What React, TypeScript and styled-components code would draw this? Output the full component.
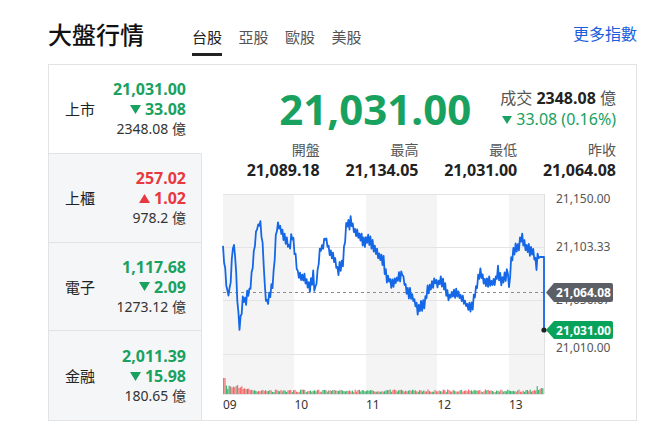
import React from "react";
import styled, { createGlobalStyle } from "styled-components";

const GlobalStyle = createGlobalStyle`
  body {
    margin: 0;
    background: #fff;
    font-family: "Noto Sans", "Noto Sans CJK TC", sans-serif;
    color: #222;
  }
`;

const GREEN = "#19a15f";
const RED = "#e8383f";

const Page = styled.div`
  width: 646px;
  height: 444px;
  box-sizing: border-box;
  padding: 0 9px 0 48px;
`;

const Header = styled.div`
  height: 64px;
  display: flex;
  align-items: flex-end;
  padding-bottom: 8px;
  box-sizing: border-box;
`;

const Title = styled.h1`
  margin: 0 48px 6px 0;
  font-size: 24px;
  font-weight: 500;
  line-height: 30px;
  color: #111;
`;

const Tabs = styled.nav`
  display: flex;
  gap: 16.5px;
  flex: 1;
`;

const Tab = styled.div<{ $active?: boolean }>`
  font-size: 15px;
  line-height: 20px;
  padding-bottom: 6px;
  border-bottom: 3px solid ${(p) => (p.$active ? "#222" : "transparent")};
  color: ${(p) => (p.$active ? "#222" : "#555")};
`;

const MoreLink = styled.a`
  font-size: 16px;
  line-height: 20px;
  margin-bottom: 12px;
  color: #1a5edb;
  text-decoration: none;
`;

const Card = styled.div`
  width: 589px;
  height: 357px;
  box-sizing: border-box;
  border: 1px solid #e3e3e3;
  display: grid;
  grid-template-columns: 153px 1fr;
`;

const MarketList = styled.div`
  display: grid;
  grid-template-rows: repeat(4, 1fr);
`;

const MarketRow = styled.div<{ $active?: boolean }>`
  display: flex;
  align-items: center;
  justify-content: space-between;
  padding: 0 15px 0 16px;
  background: ${(p) => (p.$active ? "#fff" : "#f5f6f8")};
  border-right: 1px solid ${(p) => (p.$active ? "transparent" : "#e3e3e3")};
  border-bottom: 1px solid #e3e3e3;
  &:last-child {
    border-bottom: none;
  }
`;

const MarketName = styled.div`
  font-size: 15px;
  color: #222;
`;

const MarketValues = styled.div`
  display: flex;
  flex-direction: column;
  align-items: flex-end;
`;

const Price = styled.div<{ $up?: boolean }>`
  font-size: 16px;
  font-weight: 700;
  line-height: 20px;
  color: ${(p) => (p.$up ? RED : GREEN)};
  display: flex;
  align-items: center;
`;

const Volume = styled.div`
  font-size: 14px;
  line-height: 19px;
  color: #333;
`;

const Detail = styled.div`
  display: flex;
  flex-direction: column;
`;

const TopRow = styled.div`
  display: flex;
  justify-content: flex-end;
  align-items: center;
  gap: 29px;
  padding: 18px 20px 0 0;
`;

const BigPrice = styled.div`
  font-size: 42px;
  font-weight: 700;
  line-height: 52px;
  color: ${GREEN};
`;

const Summary = styled.div`
  display: flex;
  flex-direction: column;
  align-items: flex-end;
  font-size: 16px;
  line-height: 21px;
`;

const Muted = styled.span`
  color: #555;
`;

const Strong = styled.span`
  font-weight: 700;
  color: #222;
`;

const Change = styled.div`
  color: ${GREEN};
  display: flex;
  align-items: center;
`;

const Stats = styled.div`
  display: grid;
  grid-template-columns: repeat(4, 1fr);
  padding: 5px 20px 0 19px;
`;

const Stat = styled.div`
  display: flex;
  flex-direction: column;
  align-items: flex-end;
`;

const StatLabel = styled.div`
  font-size: 14px;
  line-height: 20px;
  color: #555;
`;

const StatValue = styled.div`
  font-size: 16px;
  font-weight: 700;
  line-height: 20px;
  color: #222;
`;

const ChartBox = styled.div`
  margin: 10px 0 0 20px;
  line-height: 0;
`;

function Tri({ up, size = 11 }: { up?: boolean; size?: number }) {
  const h = Math.round(size * 0.82);
  return (
    <svg width={size} height={h} viewBox="0 0 10 8" style={{ marginRight: 4 }}>
      <path d={up ? "M5 0 L10 8 L0 8 Z" : "M0 0 L10 0 L5 8 Z"} fill="currentColor" />
    </svg>
  );
}

const markets = [
  { name: "上市", price: "21,031.00", change: "33.08", vol: "2348.08", up: false },
  { name: "上櫃", price: "257.02", change: "1.02", vol: "978.2", up: true },
  { name: "電子", price: "1,117.68", change: "2.09", vol: "1273.12", up: false },
  { name: "金融", price: "2,011.39", change: "15.98", vol: "180.65", up: false },
];

const stats = [
  { label: "開盤", value: "21,089.18" },
  { label: "最高", value: "21,134.05" },
  { label: "最低", value: "21,031.00" },
  { label: "昨收", value: "21,064.08" },
];

function seeded(seed: number) {
  let s = seed;
  return () => {
    s = (s * 1664525 + 1013904223) % 4294967296;
    return s / 4294967296;
  };
}

const keys: [number, number][] = [
  [223, 248], [227, 292], [230, 290], [233, 243], [235, 250], [237, 292], [239, 327],
  [241, 320], [243, 295], [245, 300], [248, 293], [250, 292], [254, 250], [257, 228],
  [260, 222], [263, 248], [265, 290], [267, 302], [270, 295], [273, 282], [275, 250],
  [277, 225], [280, 228], [285, 238], [290, 248], [292, 235], [295, 252], [298, 275],
  [305, 278], [310, 288], [313, 273], [315, 292], [320, 252], [325, 238], [330, 252],
  [335, 262], [338, 273], [343, 262], [347, 222], [350, 220], [355, 232], [360, 235],
  [365, 245], [368, 238], [377, 252], [383, 262], [387, 278], [393, 285], [402, 272],
  [407, 292], [413, 298], [417, 308], [423, 305], [427, 292], [435, 282], [438, 285],
  [442, 278], [445, 288], [450, 298], [453, 292], [460, 295], [467, 305], [472, 308],
  [475, 292], [480, 272], [485, 282], [495, 282], [498, 268], [503, 282], [508, 268],
  [509, 292], [511, 262], [513, 252], [518, 245], [522, 238], [527, 248], [532, 252],
  [537, 265], [539, 257], [543, 257],
];

function interp(x: number) {
  for (let i = 0; i < keys.length - 1; i++) {
    const [x0, y0] = keys[i];
    const [x1, y1] = keys[i + 1];
    if (x >= x0 && x <= x1) return y0 + ((y1 - y0) * (x - x0)) / (x1 - x0);
  }
  return keys[keys.length - 1][1];
}

// zigzag noise on top of the key points, so the line looks like tick data
function buildLine() {
  const r = seeded(11);
  const pts: string[] = [];
  let sign = 1;
  for (let x = 223; x <= 543; x += 1.1) {
    sign = -sign;
    let jitter = sign * (1 + r() * 4.5);
    if (r() > 0.88) jitter *= 1.7;
    if (x > 538) jitter = 0;
    pts.push(`${x.toFixed(1)},${(interp(x) + jitter).toFixed(1)}`);
  }
  pts.push("543,257", "544,257", "544,330");
  return "M" + pts.join(" L");
}

function buildBars() {
  const r = seeded(3);
  const bars: { x: number; h: number; c: string }[] = [];
  for (let x = 223; x < 543; x += 1.4) {
    let h = 2 + r() * 2.5;
    if (x < 225) h = 16;
    else if (x < 242) h = 5 + r() * 4;
    else if (x < 255) h = 3 + r() * 3;
    else if (x > 535) h = 3 + r() * 5;
    const k = r();
    const c = x < 225 ? "#f07070" : k < 0.45 ? "#f26a6a" : k < 0.9 ? "#3cb371" : "#a49584";
    bars.push({ x, h, c });
  }
  return bars;
}

const linePath = buildLine();
const bars = buildBars();

function IndexChart() {
  const yLabels = [
    { y: 203, t: "21,150.00" },
    { y: 251, t: "21,103.33" },
    { y: 304, t: "21,056.67" },
    { y: 352, t: "21,010.00" },
  ];
  const hours = ["09", "10", "11", "12", "13"];
  return (
    <svg width={414} height={222} viewBox="222 190 414 222">
      <rect x={223} y={194} width={71} height={200} fill="#f4f4f5" />
      <rect x={366} y={194} width={71} height={200} fill="#f4f4f5" />
      <rect x={509} y={194} width={35} height={200} fill="#f4f4f5" />
      {[194, 247, 300, 354].map((y) => (
        <line key={y} x1={223} x2={544} y1={y + 0.5} y2={y + 0.5} stroke="#e4e4e6" />
      ))}
      <line x1={544.5} x2={544.5} y1={194} y2={394} stroke="#e0e0e0" />
      <line x1={223} x2={544} y1={394.5} y2={394.5} stroke="#e4e4e6" />
      {bars.map((b, i) => (
        <rect key={i} x={b.x} y={394 - b.h} width={1.2} height={b.h} fill={b.c} />
      ))}
      <line x1={223} x2={544} y1={292.5} y2={292.5} stroke="#8c8c8c" strokeDasharray="3 3" />
      <path d={linePath} fill="none" stroke="#1467e6" strokeWidth={1.8} strokeLinejoin="round" />
      <circle cx={544} cy={330} r={2.6} fill="#222" />
      {yLabels.map((l) => (
        <text key={l.t} x={556} y={l.y} fontSize={12} fill="#555" fontFamily="Noto Sans, sans-serif">
          {l.t}
        </text>
      ))}
      {hours.map((h, i) => (
        <text key={h} x={223 + i * 71.5} y={409} fontSize={12} fill="#333" fontFamily="Noto Sans, sans-serif">
          {h}
        </text>
      ))}
      <path d="M546,292.5 L554,283 H611 Q613,283 613,285 V300 Q613,302 611,302 H554 Z" fill="#5c6066" />
      <text x={583.5} y={296.8} fontSize={12} fontWeight={700} fill="#fff" textAnchor="middle" fontFamily="Noto Sans, sans-serif">
        21,064.08
      </text>
      <path d="M546,330 L554,321 H611 Q613,321 613,323 V337 Q613,339 611,339 H554 Z" fill="#07a35a" />
      <text x={583.5} y={334.5} fontSize={12} fontWeight={700} fill="#fff" textAnchor="middle" fontFamily="Noto Sans, sans-serif">
        21,031.00
      </text>
    </svg>
  );
}

export default function App() {
  return (
    <Page>
      <GlobalStyle />
      <Header>
        <Title>大盤行情</Title>
        <Tabs>
          <Tab $active>台股</Tab>
          <Tab>亞股</Tab>
          <Tab>歐股</Tab>
          <Tab>美股</Tab>
        </Tabs>
        <MoreLink href="#">更多指數</MoreLink>
      </Header>
      <Card>
        <MarketList>
          {markets.map((m, i) => (
            <MarketRow key={m.name} $active={i === 0}>
              <MarketName>{m.name}</MarketName>
              <MarketValues>
                <Price $up={m.up}>{m.price}</Price>
                <Price $up={m.up}>
                  <Tri up={m.up} />
                  {m.change}
                </Price>
                <Volume>{m.vol} 億</Volume>
              </MarketValues>
            </MarketRow>
          ))}
        </MarketList>
        <Detail>
          <TopRow>
            <BigPrice>21,031.00</BigPrice>
            <Summary>
              <div>
                <Muted>成交 </Muted>
                <Strong>2348.08</Strong>
                <Muted> 億</Muted>
              </div>
              <Change>
                <Tri size={10} />
                33.08 (0.16%)
              </Change>
            </Summary>
          </TopRow>
          <Stats>
            {stats.map((s) => (
              <Stat key={s.label}>
                <StatLabel>{s.label}</StatLabel>
                <StatValue>{s.value}</StatValue>
              </Stat>
            ))}
          </Stats>
          <ChartBox>
            <IndexChart />
          </ChartBox>
        </Detail>
      </Card>
    </Page>
  );
}
